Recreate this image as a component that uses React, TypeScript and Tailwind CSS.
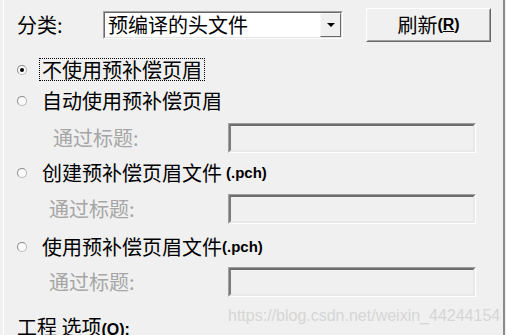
import React from "react";

const cjk = "font-['Noto_Sans_CJK_SC','Noto_Sans',sans-serif]";
const latin = "font-['Liberation_Sans',Arial,sans-serif] font-bold";

function Radio({ checked, focused, children }: { checked?: boolean; focused?: boolean; children: React.ReactNode }) {
    return (
        <div className="flex items-center h-[23px]">
            <span className="w-[10px] h-[10px] rounded-full border border-t-[#8a8a8a] border-l-[#8a8a8a] border-b-[#b8b8b8] border-r-[#b8b8b8] bg-[#fafafa] flex items-center justify-center">
                {checked && <span className="w-[4px] h-[4px] rounded-full bg-black" />}
            </span>
            <div
                className={`ml-[12px] h-[23px] flex items-center px-[2px] text-[20px] leading-none text-black ${
                    focused ? "border border-dotted border-black" : "border border-transparent"
                }`}
            >
                {children}
            </div>
        </div>
    );
}

function CaptionRow({ indent }: { indent: string }) {
    return (
        <div className="flex items-center h-[30px]">
            <span className={`${indent} w-[211px] text-[20px] leading-none text-[#a6a6a6]`}>通过标题:</span>
            <div className="w-[248px] h-[30px] border border-t-[#a0a0a0] border-l-[#a0a0a0] border-b-white border-r-white">
                <div className="w-full h-full border-2 border-t-[#6d6d6d] border-l-[#7a7a7a] border-b-[#e8e8e8] border-r-[#e8e8e8] bg-[#f0f0f0]" />
            </div>
        </div>
    );
}

export default function App() {
    return (
        <div className={`w-[506px] h-[335px] overflow-hidden bg-[#f0f0f0] flex ${cjk}`}>
            {/* left edge highlight */}
            <div className="w-[3px] shrink-0" />
            <div className="w-px shrink-0 bg-white" />

            <div className="flex-1 flex flex-col pl-[13px]">
                {/* category row */}
                <div className="flex items-center mt-[8px] h-[34px]">
                    <span className="w-[86px] text-[20px] leading-none text-black">分类:</span>
                    <div className="w-[240px] h-[28px] border border-t-[#a0a0a0] border-l-[#a0a0a0] border-b-white border-r-white">
                        <div className="flex w-full h-full border border-t-[#696969] border-l-[#696969] border-b-[#e3e3e3] border-r-[#e3e3e3] bg-white">
                            <span className="flex-1 pl-[3px] text-[20px] leading-[24px] text-black">预编译的头文件</span>
                            <div className="w-[21px] h-full border border-t-[#f8f8f8] border-l-[#f8f8f8] border-b-[#6a6a6a] border-r-[#6a6a6a] bg-[#f0f0f0] flex items-center justify-center">
                                <svg width="8" height="4" viewBox="0 0 8 4">
                                    <polygon points="0,0 8,0 4,4" fill="#000" />
                                </svg>
                            </div>
                        </div>
                    </div>
                    <div className="ml-[23px] w-[125px] h-[34px] border border-t-white border-l-white border-b-[#696969] border-r-[#696969]">
                        <div className="w-full h-full border border-t-[#f0f0f0] border-l-[#f0f0f0] border-b-[#a0a0a0] border-r-[#a0a0a0] flex items-center justify-center">
                            <span className="text-[20px] leading-none text-black">刷新</span>
                            <span className={`${latin} text-[16px] text-black`}>
                                (<span className="underline">R</span>)
                            </span>
                        </div>
                    </div>
                </div>

                <div className="mt-[16px]">
                    <Radio checked focused>不使用预补偿页眉</Radio>
                </div>
                <div className="mt-[8px]">
                    <Radio>自动使用预补偿页眉</Radio>
                </div>
                <div className="mt-[11px]">
                    <CaptionRow indent="pl-[36px]" />
                </div>
                <div className="mt-[8px]">
                    <Radio>
                        创建预补偿页眉文件 <span className={`${latin} text-[15px] ml-[4px]`}>(.pch)</span>
                    </Radio>
                </div>
                <div className="mt-[10px]">
                    <CaptionRow indent="pl-[32px]" />
                </div>
                <div className="mt-[11px]">
                    <Radio>
                        使用预补偿页眉文件<span className={`${latin} text-[15px]`}>(.pch)</span>
                    </Radio>
                </div>
                <div className="mt-[9px]">
                    <CaptionRow indent="pl-[32px]" />
                </div>

                {/* bottom row */}
                <div className="flex items-start mt-[11px]">
                    <span className="mt-[9px] w-[211px] text-[20px] leading-none text-black whitespace-nowrap">
                        工程 选项<span className={`${latin} text-[16px]`}>(<span className="underline">O</span>):</span>
                    </span>
                    <span className="font-['Liberation_Sans',Arial,sans-serif] text-[16px] leading-none text-[#d6d6d6] whitespace-nowrap">
                        https://blog.csdn.net/weixin_44244154
                    </span>
                </div>
            </div>

            {/* right edge */}
            <div className="w-[2px] shrink-0 bg-[#8a8a8a]" />
            <div className="w-px shrink-0 bg-[#f0f0f0]" />
        </div>
    );
}
